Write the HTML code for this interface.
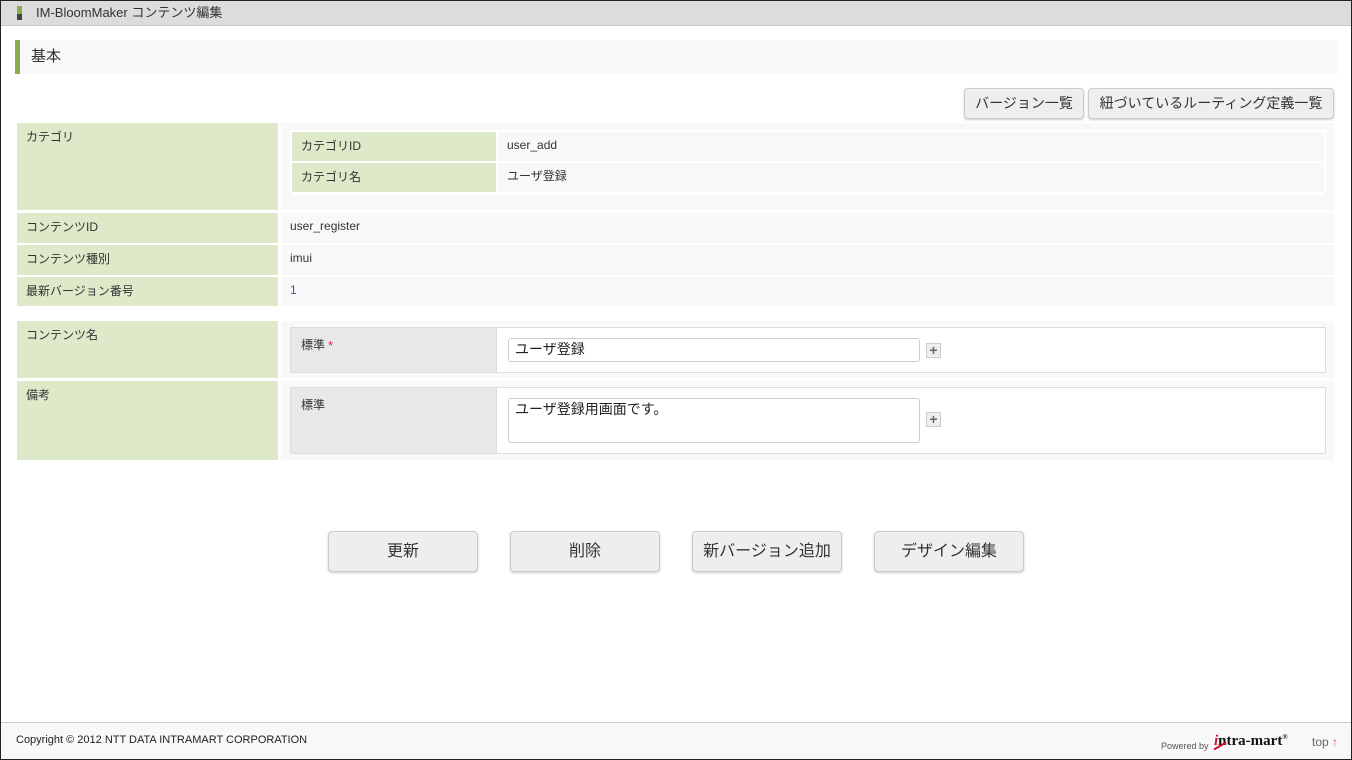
<!DOCTYPE html>
<html><head><meta charset="utf-8"><style>
*{box-sizing:border-box;margin:0;padding:0}
body{width:1352px;height:760px;position:relative;overflow:hidden;background:#fff;font-family:"Liberation Sans","Noto Sans CJK JP",sans-serif;color:#333;font-size:12px;line-height:1.2}
.a{position:absolute}
.frame{left:0;top:0;width:1352px;height:760px;border:1px solid #222;}
.lab{background:#dde9c8;padding:7px 9px;font-size:12px}
.val{background:#f8f8f8;padding:7px 9px;font-size:12px}
.btn{background:#eee;border:1px solid #ccc;border-radius:4px;box-shadow:0 1px 2px rgba(0,0,0,.2);text-align:center;color:#333}
.plus{width:15px;height:15px;background:#eee;border:1px solid #ccc;color:#666;font-size:14px;line-height:12px;text-align:center;font-weight:bold}
</style></head><body>
<div class="a" style="left:1px;top:1px;width:1350px;height:25px;background:#dcdcdc;border-bottom:1px solid #c8c8c8"></div>
<div class="a" style="left:17px;top:6px;width:5px;height:8px;background:#8aad4a"></div>
<div class="a" style="left:17px;top:14px;width:5px;height:6px;background:#444"></div>
<div class="a" style="left:36px;top:5px;font-size:13px;color:#333">IM-BloomMaker コンテンツ編集</div>

<div class="a" style="left:15px;top:40px;width:1322px;height:34px;background:#f8f8f8;border-left:5px solid #8aad4a"></div>
<div class="a" style="left:31px;top:48px;font-size:15px">基本</div>

<div class="a btn" style="left:964px;top:88px;width:120px;height:31px;line-height:29px;font-size:14px">バージョン一覧</div>
<div class="a btn" style="left:1088px;top:88px;width:246px;height:31px;line-height:29px;font-size:14px">紐づいているルーティング定義一覧</div>

<div class="a lab" style="left:17px;top:123px;width:261px;height:87px">カテゴリ</div>
<div class="a" style="left:281px;top:123px;width:1053px;height:87px;background:#f8f8f8"></div>
<div class="a" style="left:290px;top:130px;width:1036px;height:65px;background:#fff"></div>
<div class="a lab" style="left:292px;top:132px;width:204px;height:29px">カテゴリID</div>
<div class="a val" style="left:498px;top:132px;width:826px;height:29px;padding-top:6px">user_add</div>
<div class="a lab" style="left:292px;top:163px;width:204px;height:29px">カテゴリ名</div>
<div class="a val" style="left:498px;top:163px;width:826px;height:29px;padding-top:6px">ユーザ登録</div>

<div class="a lab" style="left:17px;top:213px;width:261px;height:30px">コンテンツID</div>
<div class="a val" style="left:281px;top:213px;width:1053px;height:30px;padding-top:6px">user_register</div>
<div class="a lab" style="left:17px;top:245px;width:261px;height:30px">コンテンツ種別</div>
<div class="a val" style="left:281px;top:245px;width:1053px;height:30px;padding-top:6px">imui</div>
<div class="a lab" style="left:17px;top:277px;width:261px;height:29px">最新バージョン番号</div>
<div class="a val" style="left:281px;top:277px;width:1053px;height:29px;color:#2a5ea8;padding-top:6px">1</div>

<div class="a lab" style="left:17px;top:321px;width:261px;height:57px">コンテンツ名</div>
<div class="a" style="left:281px;top:321px;width:1053px;height:57px;background:#f8f8f8"></div>
<div class="a" style="left:290px;top:327px;width:1036px;height:46px;background:#fff;border:1px solid #ddd"></div>
<div class="a" style="left:291px;top:328px;width:206px;height:44px;background:#e8e8e8;border-right:1px solid #ddd;padding:10px"><span>標準</span><span style="color:#e0245e;font-size:13px;vertical-align:top;margin-left:3px">*</span></div>
<div class="a" style="left:508px;top:338px;width:412px;height:24px;border:1px solid #ccc;border-radius:3px;padding:2px 6px;font-size:14px;color:#222">ユーザ登録</div>
<div class="a plus" style="left:926px;top:343px">+</div>

<div class="a lab" style="left:17px;top:381px;width:261px;height:79px">備考</div>
<div class="a" style="left:281px;top:381px;width:1053px;height:79px;background:#f8f8f8"></div>
<div class="a" style="left:290px;top:387px;width:1036px;height:67px;background:#fff;border:1px solid #ddd"></div>
<div class="a" style="left:291px;top:388px;width:206px;height:65px;background:#e8e8e8;border-right:1px solid #ddd;padding:10px">標準</div>
<div class="a" style="left:508px;top:398px;width:412px;height:45px;border:1px solid #ccc;border-radius:3px;padding:2px 6px;font-size:14px;color:#222">ユーザ登録用画面です。</div>
<div class="a plus" style="left:926px;top:412px">+</div>

<div class="a btn" style="left:328px;top:531px;width:150px;height:41px;line-height:39px;font-size:16px">更新</div>
<div class="a btn" style="left:510px;top:531px;width:150px;height:41px;line-height:39px;font-size:16px">削除</div>
<div class="a btn" style="left:692px;top:531px;width:150px;height:41px;line-height:39px;font-size:16px">新バージョン追加</div>
<div class="a btn" style="left:874px;top:531px;width:150px;height:41px;line-height:39px;font-size:16px">デザイン編集</div>

<div class="a" style="left:1px;top:722px;width:1350px;height:37px;background:#f8f8f8;border-top:1px solid #ccc"></div>
<div class="a" style="left:16px;top:734px;font-size:11px;color:#222">Copyright © 2012 NTT DATA INTRAMART CORPORATION</div>
<div class="a" style="left:1161px;top:741px;font-size:9px;color:#555">Powered by</div>
<div class="a" style="left:1214px;top:732px;font-size:15px;font-family:'Liberation Serif',serif;font-weight:bold;color:#111"><span style="color:#d0102b;font-style:italic">i</span>ntra-mart<sup style="font-size:7px">®</sup></div>
<div class="a" style="left:1213px;top:745px;width:14px;height:2px;background:#d0102b;transform:rotate(-30deg)"></div>
<div class="a" style="left:1312px;top:735px;font-size:12px;color:#666">top <span style="color:#d55">↑</span></div>

<div class="a frame"></div>
</body></html>
